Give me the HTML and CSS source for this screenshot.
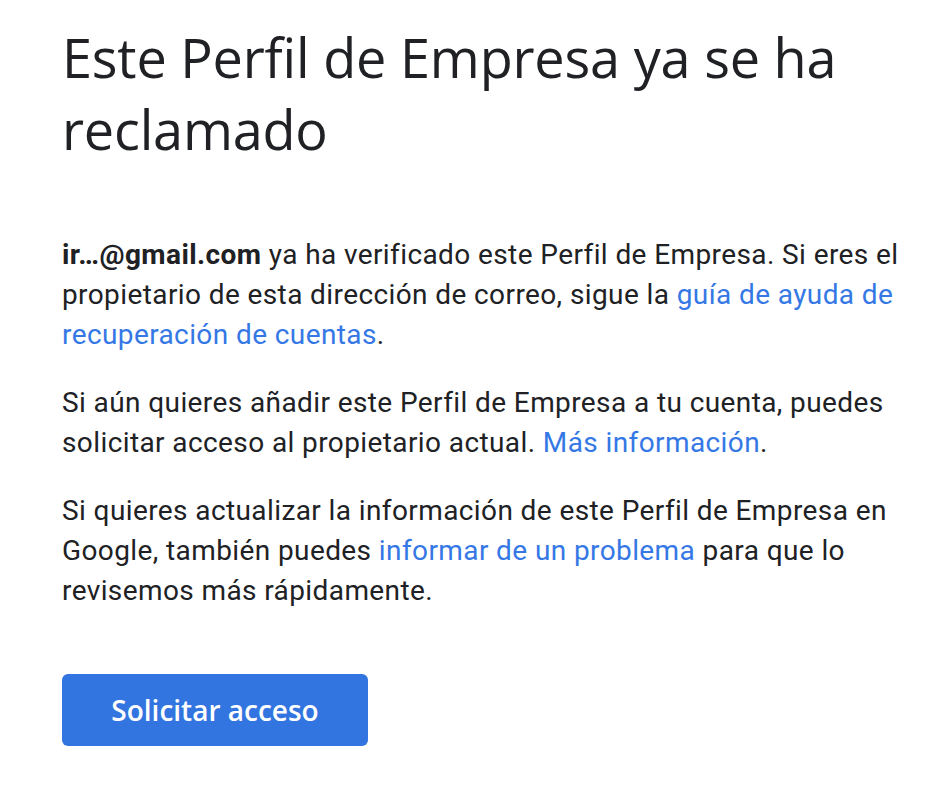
FILE: index.html
```html
<!DOCTYPE html>
<html lang="es">
<head>
    <meta charset="UTF-8">
    <meta name="viewport" content="width=device-width, initial-scale=1.0">
    <title>Perfil de Empresa reclamado</title>
    <link rel="stylesheet" href="styles.css">
</head>
<body>

    <div class="container">
        <h1 class="title">Este Perfil de Empresa ya se ha reclamado</h1>

        <div class="content">
            <p><strong>ir…@gmail.com</strong> ya ha verificado este Perfil de Empresa. Si eres el propietario de esta dirección de correo, sigue la <a href="#">guía de ayuda de recuperación de cuentas</a>.</p>
            <p>Si aún quieres añadir este Perfil de Empresa a tu cuenta, puedes solicitar acceso al propietario actual. <a href="#">Más información</a>.</p>
            <p>Si quieres actualizar la información de este Perfil de Empresa en Google, también puedes <a href="#">informar de un problema</a> para que lo revisemos más rápidamente.</p>
        </div>

        <div class="actions">
            <button class="primary-btn">Solicitar acceso</button>
        </div>
    </div>

</body>
</html>
```

FILE: styles.css
```css
body {
    font-family: Roboto, 'Liberation Sans', sans-serif;
    margin: 0;
    padding: 0;
    background-color: #fff;
    color: #202124;
}

.container {
    width: 850px;
    padding: 21px 0 0 62px;
}

.title {
    font-family: 'Open Sans', sans-serif;
    font-weight: 400;
    font-size: 54px;
    line-height: 72px;
    margin: 0 0 70px;
    letter-spacing: -0.2px;
}

.content p {
    font-size: 28px;
    line-height: 40px;
    margin: 0 0 28px;
    letter-spacing: 0.4px;
}

.content strong {
    font-weight: 700;
}

.content a {
    color: #3578e5;
    text-decoration: none;
}

.actions {
    margin-top: 63px;
}

.primary-btn {
    font-family: 'Open Sans', sans-serif;
    font-size: 28px;
    font-weight: 600;
    color: #fff;
    background-color: #3275e0;
    border: none;
    border-radius: 6px;
    width: 306px;
    height: 72px;
    cursor: pointer;
}
```
